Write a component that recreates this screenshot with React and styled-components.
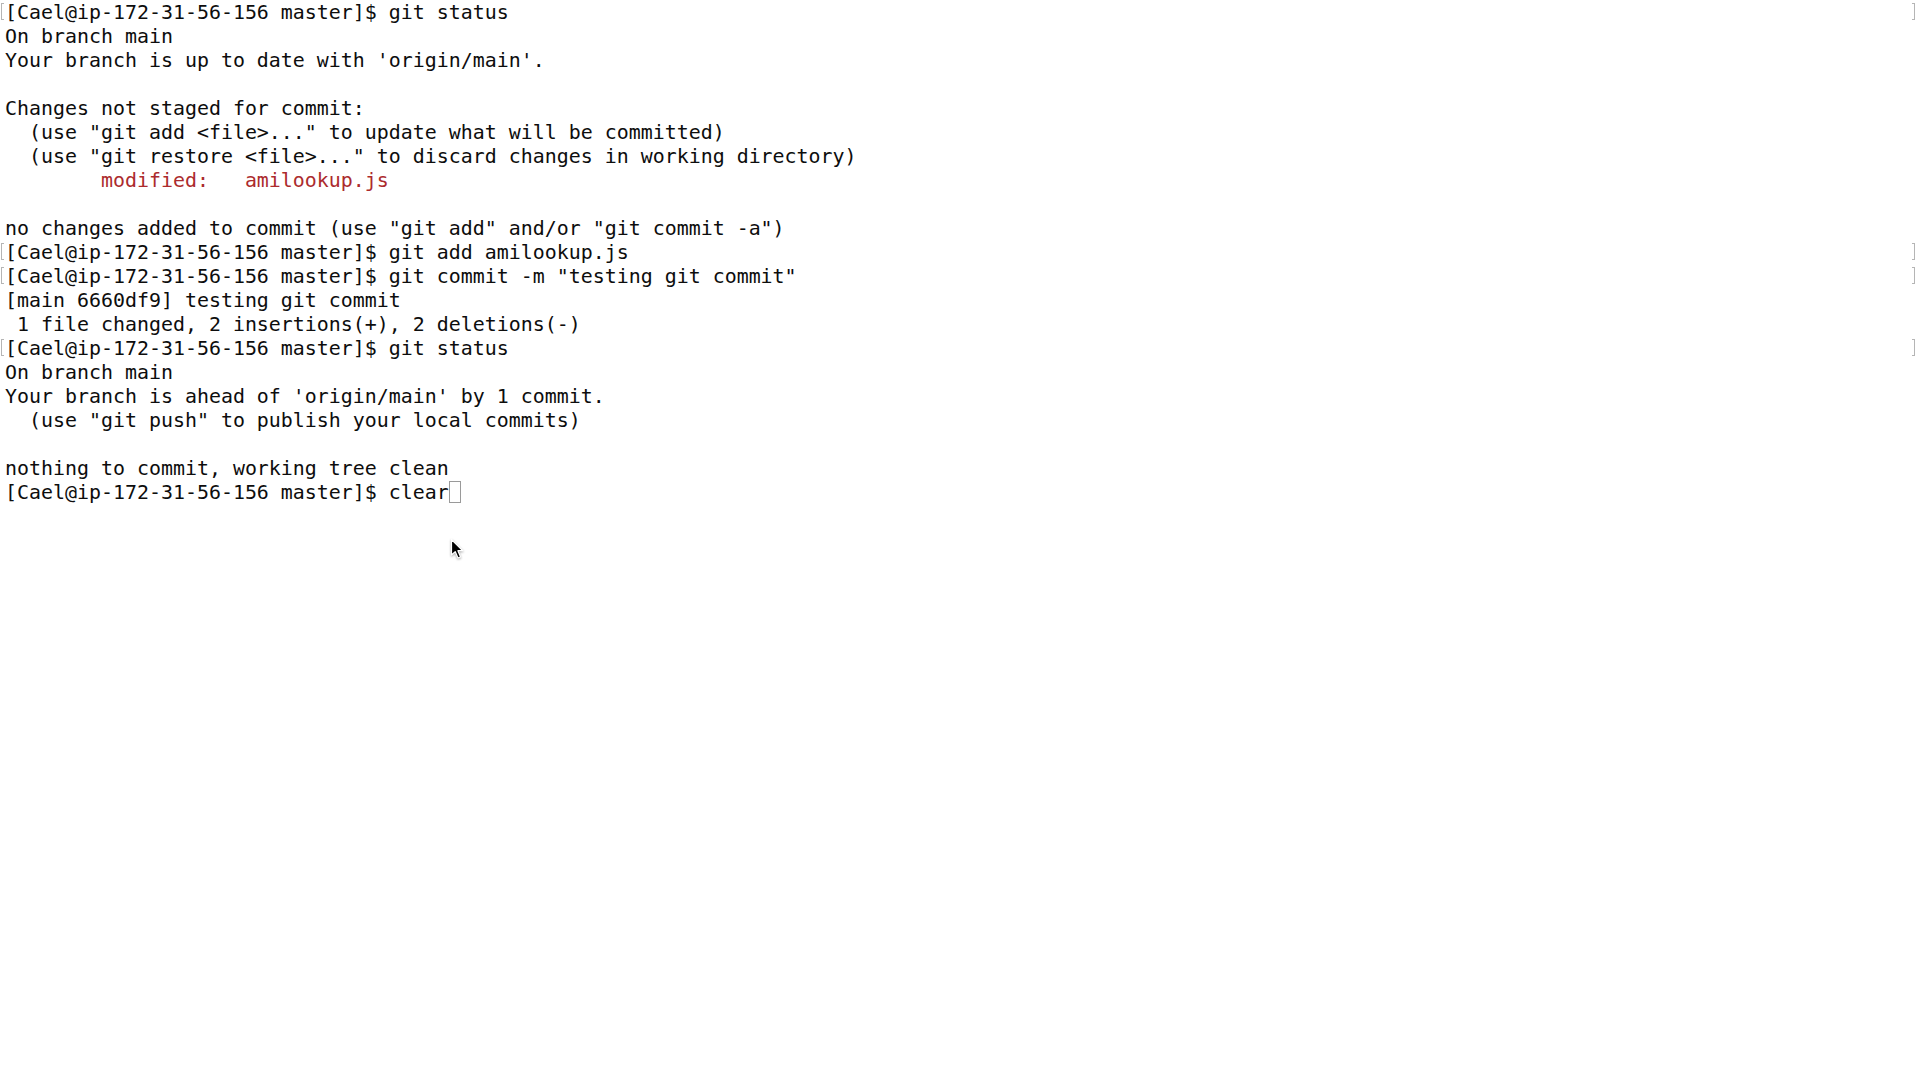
import React from "react";
import styled, { createGlobalStyle } from "styled-components";

const Global = createGlobalStyle`
  html, body { margin: 0; padding: 0; background: #ffffff; }
  body { width: 1920px; height: 1080px; overflow: hidden; }
`;

const Screen = styled.div`
  position: relative;
  box-sizing: border-box;
  width: 1920px;
  height: 1080px;
  padding-top: 1px;
  background: #ffffff;
  font-family: "DejaVu Sans Mono", "Liberation Mono", monospace;
  font-size: 19.93px;
  line-height: 24px;
  color: #0d0d0d;
`;

const Line = styled.div`
  display: grid;
  grid-template-columns: 5px 1fr 8px;
  height: 24px;
  white-space: pre;
`;

const Mark = styled.span`
  display: block;
  margin-top: 2px;
  height: 17px;
  box-sizing: border-box;
  width: 3px;
  border: 1px solid ${(p) => (p.$on ? "#b5b5b5" : "transparent")};
  border-${(p) => (p.$side === "left" ? "right" : "left")}: none;
  margin-left: ${(p) => (p.$side === "left" ? "1px" : "0")};
`;

const Text = styled.span`
  display: block;
`;

const Red = styled.span`
  color: #ac2b2d;
`;

const Cursor = styled.span`
  display: inline-block;
  width: 12px;
  height: 22px;
  box-sizing: border-box;
  border: 1px solid #9a9a9a;
  vertical-align: top;
  margin-top: 0px;
`;

const Pointer = styled.svg`
  position: absolute;
  left: 450px;
  top: 538px;
  width: 16px;
  height: 22px;
  filter: drop-shadow(0 1px 1px rgba(0, 0, 0, 0.35));
`;

const P = "[Cael@ip-172-31-56-156 master]$ ";

const lines = [
  { t: P + "git status", m: true },
  { t: "On branch main" },
  { t: "Your branch is up to date with 'origin/main'." },
  { t: "" },
  { t: "Changes not staged for commit:" },
  { t: '  (use "git add <file>..." to update what will be committed)' },
  { t: '  (use "git restore <file>..." to discard changes in working directory)' },
  { t: "        ", red: "modified:   amilookup.js" },
  { t: "" },
  { t: 'no changes added to commit (use "git add" and/or "git commit -a")' },
  { t: P + "git add amilookup.js", m: true },
  { t: P + 'git commit -m "testing git commit"', m: true },
  { t: "[main 6660df9] testing git commit" },
  { t: " 1 file changed, 2 insertions(+), 2 deletions(-)" },
  { t: P + "git status", m: true },
  { t: "On branch main" },
  { t: "Your branch is ahead of 'origin/main' by 1 commit." },
  { t: '  (use "git push" to publish your local commits)' },
  { t: "" },
  { t: "nothing to commit, working tree clean" },
  { t: P + "clear", cursor: true },
];

export default function App() {
  return (
    <Screen>
      <Global />
      {lines.map((l, i) => (
        <Line key={i}>
          <Mark $side="left" $on={!!l.m} />
          <Text>
            {l.t}
            {l.red && <Red>{l.red}</Red>}
            {l.cursor && <Cursor />}
          </Text>
          <Mark $side="right" $on={!!l.m} />
        </Line>
      ))}
      <Pointer viewBox="0 0 16 22">
        <path
          d="M1.5 1.5 L1.5 17 L5.2 13.6 L8 20 L10.6 18.9 L7.9 12.7 L12.8 12.7 Z"
          fill="#000"
          stroke="#fff"
          strokeWidth="1.2"
          strokeLinejoin="round"
        />
      </Pointer>
    </Screen>
  );
}
